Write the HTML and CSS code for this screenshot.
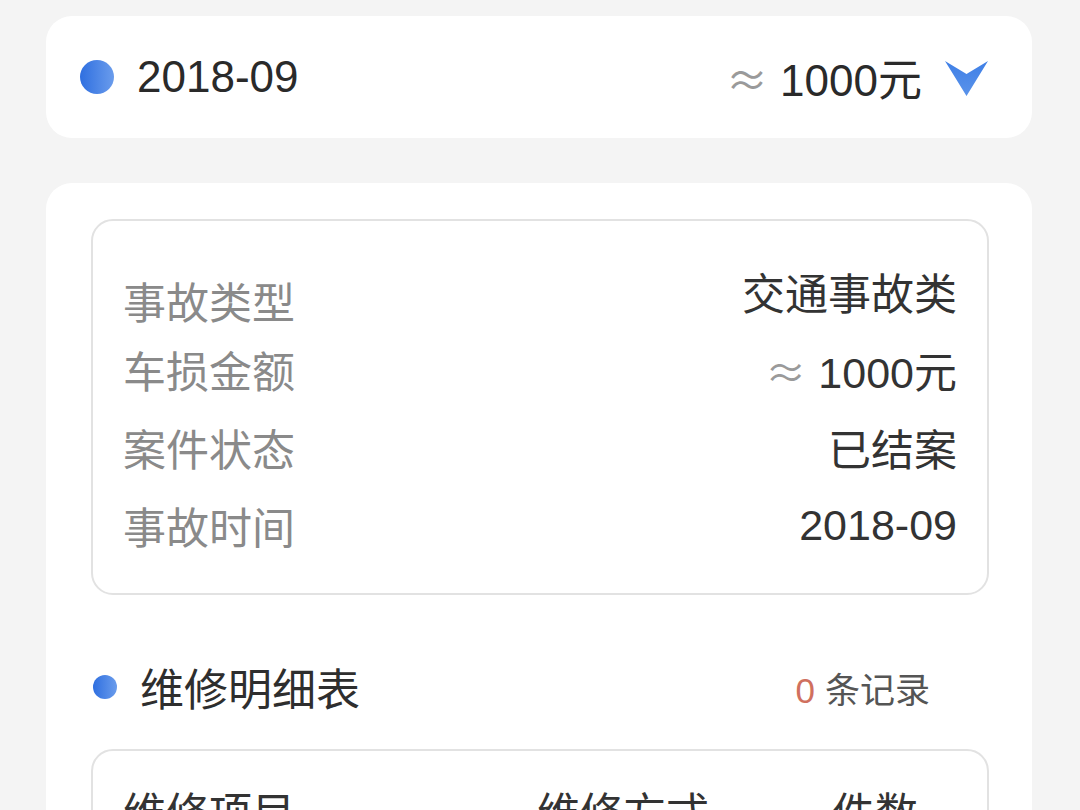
FILE: index.html
```html
<!DOCTYPE html>
<html lang="zh-CN">
<head>
    <meta charset="UTF-8">
    <meta name="viewport" content="width=device-width, initial-scale=1.0">
    <title>车损记录</title>
    <link rel="stylesheet" href="styles.css">
</head>
<body>
    <div class="page">
        <div class="card summary">
            <div class="summary-left">
                <span class="dot"></span>
                <span class="date">2018-09</span>
            </div>
            <div class="summary-right">
                <span class="approx">≈</span>
                <span class="amount">1000元</span>
                <svg class="chevron" width="43" height="36" viewBox="0 0 43 36">
                    <defs>
                        <linearGradient id="chev" x1="0" y1="0" x2="0" y2="1">
                            <stop offset="0" stop-color="#3f7fe6"/>
                            <stop offset="1" stop-color="#5a93ea"/>
                        </linearGradient>
                    </defs>
                    <path d="M0 1 L21.5 14 L43 1 L21.5 36 Z" fill="url(#chev)"/>
                </svg>
            </div>
        </div>

        <div class="card detail">
            <div class="info-box">
                <div class="info-row first">
                    <span class="label">事故类型</span>
                    <span class="value">交通事故类</span>
                </div>
                <div class="info-row">
                    <span class="label">车损金额</span>
                    <span class="value"><span class="approx">≈</span>1000元</span>
                </div>
                <div class="info-row">
                    <span class="label">案件状态</span>
                    <span class="value">已结案</span>
                </div>
                <div class="info-row">
                    <span class="label">事故时间</span>
                    <span class="value">2018-09</span>
                </div>
            </div>

            <div class="section-head">
                <div class="section-title">
                    <span class="dot small"></span>
                    <span>维修明细表</span>
                </div>
                <div class="records"><span class="count">0</span>条记录</div>
            </div>

            <div class="table-box">
                <div class="table-head">
                    <span>维修项目</span>
                    <span>维修方式</span>
                    <span>件数</span>
                </div>
            </div>
        </div>
    </div>
</body>
</html>
```

FILE: styles.css
```css
body {
    margin: 0;
    padding: 0;
    background-color: #f4f4f4;
    font-family: "Liberation Sans", "Noto Sans CJK SC", sans-serif;
    color: #333;
    overflow: hidden;
}

.page {
    padding: 16px 48px 0 46px;
    display: flex;
    flex-direction: column;
    gap: 45px;
}

.card {
    background-color: #fff;
    border-radius: 26px;
}

/* 顶部汇总 */
.summary {
    height: 122px;
    display: flex;
    align-items: center;
    justify-content: space-between;
    padding: 0 44px 0 34px;
}

.summary-left {
    display: flex;
    align-items: center;
    gap: 23px;
}

.dot {
    width: 34px;
    height: 34px;
    border-radius: 50%;
    background: linear-gradient(90deg, #2f6fe0, #6a9cec);
    flex-shrink: 0;
}

.dot.small {
    width: 24px;
    height: 24px;
}

.date {
    font-size: 44px;
    color: #2a2a2a;
}

.summary-right {
    display: flex;
    align-items: center;
}

.approx {
    font-family: "Noto Sans CJK SC", sans-serif;
    color: #9a9a9a;
    margin-right: 12px;
}

.summary-right .approx {
    font-size: 42px;
}

.amount {
    font-size: 44px;
    color: #2a2a2a;
}

.chevron {
    margin-left: 23px;
    margin-top: 2px;
}

/* 详情 */
.detail {
    padding: 36px 43px 0 45px;
    min-height: 700px;
}

.info-box {
    border: 2px solid #e2e2e2;
    border-radius: 22px;
    padding: 31px 30px 29px 30px;
}

.info-row {
    height: 78px;
    display: flex;
    align-items: center;
    justify-content: space-between;
    font-size: 43px;
}

.info-row.first .label {
    margin-top: 18px;
}

.label {
    color: #8a8a8a;
}

.value {
    color: #333;
}

.value .approx {
    font-size: 41px;
}

.section-head {
    height: 80px;
    margin-top: 52px;
    display: flex;
    align-items: center;
    justify-content: space-between;
    padding: 0 59px 0 2px;
}

.section-title {
    display: flex;
    align-items: center;
    gap: 23px;
    font-size: 44px;
    color: #2e2e2e;
}

.records {
    font-size: 35px;
    color: #555;
}

.count {
    color: #d0705e;
    margin-right: 10px;
}

.table-box {
    margin-top: 22px;
    border: 2px solid #e2e2e2;
    border-radius: 22px;
    padding: 28px 30px;
}

.table-head {
    display: grid;
    grid-template-columns: 414px 295px 1fr;
    font-size: 43px;
    color: #333;
}
```
